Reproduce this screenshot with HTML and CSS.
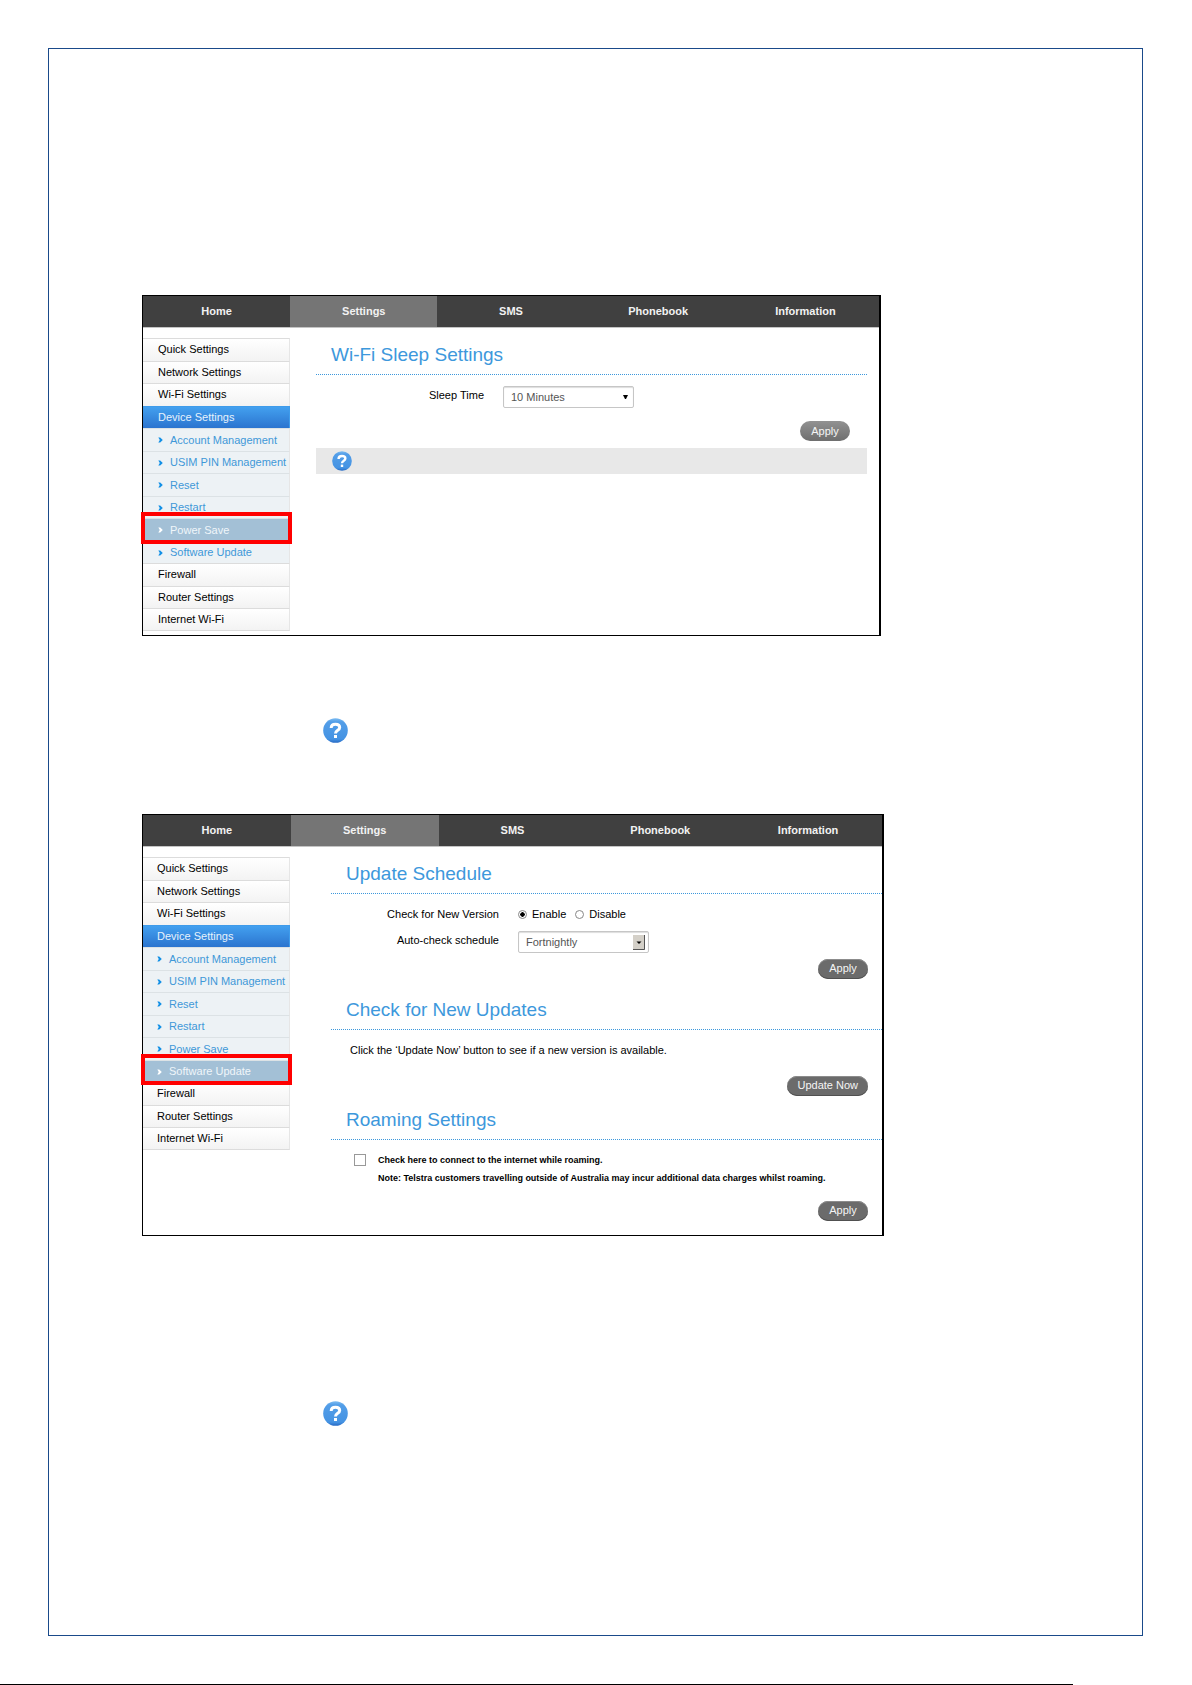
FILE: index.html
```
<!DOCTYPE html>
<html lang="en">

<head>
    <meta charset="UTF-8">
    <meta name="viewport" content="width=device-width, initial-scale=1.0">
    <title>Device Settings</title>
    <link rel="stylesheet" href="styles.css">
</head>

<body>
    <!-- Shared icon shapes -->
    <svg class="sprite" aria-hidden="true">
        <defs>
            <linearGradient id="helpFill" x1="0" y1="0" x2="0" y2="1">
                <stop offset="0" stop-color="#7dbcf2" />
                <stop offset="0.15" stop-color="#539ee8" />
                <stop offset="0.85" stop-color="#4593e3" />
                <stop offset="1" stop-color="#2669c4" />
            </linearGradient>
        </defs>
        <symbol id="help" viewBox="0 0 25 25">
            <circle cx="12.5" cy="12.5" r="12.3" fill="url(#helpFill)" />
            <path d="M8.2 9.9C8.2 7.2 10 6.2 12.5 6.2C15.2 6.2 16.7 7.4 16.7 9.4C16.7 12.4 12.5 12 12.5 15.4" fill="none" stroke="#fff" stroke-width="3" />
            <rect x="11" y="17" width="3" height="3" fill="#fff" />
        </symbol>
        <symbol id="arrow" viewBox="0 0 5 6">
            <path d="M0.3 0.4H2.2L4.8 3L2.2 5.6H0.3L1.8 3Z" fill="currentColor" />
        </symbol>
    </svg>

    <main class="sheet">
        <!-- Power save screen -->
        <section class="panel panel-sleep">
            <nav class="tabs">
                <a href="#">Home</a>
                <a href="#" class="active">Settings</a>
                <a href="#">SMS</a>
                <a href="#">Phonebook</a>
                <a href="#">Information</a>
            </nav>
            <div class="panel-body">
                <ul class="side-menu">
                    <li><a href="#">Quick Settings</a></li>
                    <li><a href="#">Network Settings</a></li>
                    <li><a href="#">Wi-Fi Settings</a></li>
                    <li><a href="#" class="active">Device Settings</a></li>
                    <li class="sub"><a href="#"><svg><use href="#arrow" /></svg>Account Management</a></li>
                    <li class="sub"><a href="#"><svg><use href="#arrow" /></svg>USIM PIN Management</a></li>
                    <li class="sub"><a href="#"><svg><use href="#arrow" /></svg>Reset</a></li>
                    <li class="sub"><a href="#"><svg><use href="#arrow" /></svg>Restart</a></li>
                    <li class="sub current"><a href="#"><svg><use href="#arrow" /></svg>Power Save</a></li>
                    <li class="sub"><a href="#"><svg><use href="#arrow" /></svg>Software Update</a></li>
                    <li><a href="#">Firewall</a></li>
                    <li><a href="#">Router Settings</a></li>
                    <li><a href="#">Internet Wi-Fi</a></li>
                </ul>
                <form class="content">
                    <h2>Wi-Fi Sleep Settings</h2>
                    <div class="form-row">
                        <label class="row-label" for="sleepTime">Sleep Time</label>
                        <div class="select-box">
                            <select id="sleepTime">
                                <option>10 Minutes</option>
                            </select>
                            <svg class="caret" viewBox="0 0 5 6"><path d="M0 1H5L3 5H2Z" /></svg>
                        </div>
                    </div>
                    <div class="actions actions-sleep">
                        <button type="button" class="btn btn-light">Apply</button>
                    </div>
                    <div class="help-bar">
                        <svg><use href="#help" /></svg>
                    </div>
                </form>
            </div>
        </section>

        <svg class="help-icon help-first"><use href="#help" /></svg>

        <!-- Software update screen -->
        <section class="panel panel-update">
            <nav class="tabs">
                <a href="#">Home</a>
                <a href="#" class="active">Settings</a>
                <a href="#">SMS</a>
                <a href="#">Phonebook</a>
                <a href="#">Information</a>
            </nav>
            <div class="panel-body">
                <ul class="side-menu">
                    <li><a href="#">Quick Settings</a></li>
                    <li><a href="#">Network Settings</a></li>
                    <li><a href="#">Wi-Fi Settings</a></li>
                    <li><a href="#" class="active">Device Settings</a></li>
                    <li class="sub"><a href="#"><svg><use href="#arrow" /></svg>Account Management</a></li>
                    <li class="sub"><a href="#"><svg><use href="#arrow" /></svg>USIM PIN Management</a></li>
                    <li class="sub"><a href="#"><svg><use href="#arrow" /></svg>Reset</a></li>
                    <li class="sub"><a href="#"><svg><use href="#arrow" /></svg>Restart</a></li>
                    <li class="sub"><a href="#"><svg><use href="#arrow" /></svg>Power Save</a></li>
                    <li class="sub current"><a href="#"><svg><use href="#arrow" /></svg>Software Update</a></li>
                    <li><a href="#">Firewall</a></li>
                    <li><a href="#">Router Settings</a></li>
                    <li><a href="#">Internet Wi-Fi</a></li>
                </ul>
                <form class="content">
                    <h2>Update Schedule</h2>
                    <div class="form-row" role="radiogroup" aria-labelledby="checkLabel">
                        <span class="row-label" id="checkLabel">Check for New Version</span>
                        <div class="radios">
                            <label><input type="radio" name="check" checked>Enable</label>
                            <label><input type="radio" name="check">Disable</label>
                        </div>
                    </div>
                    <div class="form-row">
                        <label class="row-label" for="schedule">Auto-check schedule</label>
                        <div class="select-box classic">
                            <select id="schedule">
                                <option>Fortnightly</option>
                            </select>
                            <svg class="caret" viewBox="0 0 12 15">
                                <path d="M0 0H12V15H0Z" fill="#d4d0c8" />
                                <path d="M11.5 0V14.5H0" fill="none" stroke="#555" />
                                <path d="M3.5 6.5H8.5L6 9Z" />
                            </svg>
                        </div>
                    </div>
                    <div class="actions">
                        <button type="button" class="btn">Apply</button>
                    </div>

                    <h2>Check for New Updates</h2>
                    <p class="hint">Click the ‘Update Now’ button to see if a new version is available.</p>
                    <div class="actions actions-now">
                        <button type="button" class="btn">Update Now</button>
                    </div>

                    <h2>Roaming Settings</h2>
                    <div class="roaming">
                        <input type="checkbox" id="roaming">
                        <div>
                            <label for="roaming">Check here to connect to the internet while roaming.</label>
                            <p>Note: Telstra customers travelling outside of Australia may incur additional data charges whilst roaming.</p>
                        </div>
                    </div>
                    <div class="actions actions-roaming">
                        <button type="button" class="btn">Apply</button>
                    </div>
                </form>
            </div>
        </section>

        <svg class="help-icon help-second"><use href="#help" /></svg>
    </main>
    <hr class="page-rule">
</body>

</html>
```
FILE: styles.css
```
/* Base Styles */
* {
    margin: 0;
    padding: 0;
    box-sizing: border-box;
}

body {
    background-color: #fff;
    color: #000;
    font-family: "Liberation Sans", Arial, sans-serif;
    font-size: 11px;
    line-height: 18px;
}

a {
    color: inherit;
    text-decoration: none;
}

.sprite {
    display: block;
    width: 0;
    height: 0;
}

/* Page frame */
.sheet {
    margin: 48px 49px 48px 48px;
    padding: 246px 258px 209px 93px;
    border: 1px solid #1a4a8a;
}

.page-rule {
    width: 90%;
    height: 1px;
    border: none;
    background-color: #000;
}

/* Panels */
.panel {
    border: 1px solid #000;
    border-right-width: 2px;
}

.panel-sleep {
    margin-right: 3px;
    padding-bottom: 4px;
}

.panel-body {
    display: flex;
    align-items: flex-start;
}

/* Tabs */
.tabs {
    display: grid;
    grid-template-columns: repeat(5, 1fr);
    border-bottom: 1px solid #c4c4c4;
    background-color: #404040;
    color: #f2f2f2;
    font-weight: bold;
    text-align: center;
}

.tabs a {
    height: 31px;
    line-height: 31px;
}

.tabs .active {
    background-color: #757575;
}

/* Side menu */
.side-menu {
    flex: 0 0 147px;
    margin-top: 10px;
    list-style: none;
}

.side-menu li {
    position: relative;
}

.side-menu a {
    display: block;
    height: 22px;
    padding-left: 15px;
    border-top: 1px solid #dcdcdc;
    border-right: 1px solid #e6e6e6;
    background: linear-gradient(#fff, #f3f3f3);
    line-height: 21px;
    white-space: nowrap;
}

.side-menu li:nth-child(odd) a {
    height: 23px;
}

.side-menu li:last-child a {
    border-bottom: 1px solid #dcdcdc;
}

.side-menu .active {
    border-color: #3f9bea;
    background: linear-gradient(#43a0ef, #2b74cf);
    color: #e6f2fc;
}

.side-menu .sub a {
    display: flex;
    align-items: center;
    gap: 7px;
    border-top-color: #dce2e5;
    background: #edf2f5;
    color: #3f98d8;
}

.side-menu .sub svg {
    width: 5px;
    height: 6px;
    color: #1290e6;
}

.side-menu .current a {
    background: #a3c0d6;
    color: #f0f6fa;
}

.side-menu .current svg {
    color: #fff;
}

.panel-update .side-menu a {
    padding-left: 14px;
}

/* Red marker round the current item */
.side-menu .current::after {
    content: "";
    position: absolute;
    inset: -6px -2px -3px;
    z-index: 1;
    border: 4px solid #f00;
}

/* Content */
.content {
    flex: 1;
    min-width: 0;
    padding-top: 16px;
}

.panel-sleep .content {
    margin: 0 12px 0 26px;
}

.panel-update .content {
    margin-left: 41px;
    padding-bottom: 14px;
}

h2 {
    margin-bottom: 11px;
    padding: 0 15px 8px;
    border-bottom: 1px dotted #3d98dc;
    color: #3d98dc;
    font-size: 19px;
    font-weight: normal;
    line-height: 22px;
}

.form-row {
    display: flex;
    align-items: flex-start;
    gap: 19px;
}

.form-row + .form-row {
    margin-top: 8px;
}

.row-label {
    width: 168px;
    text-align: right;
}

.radios {
    display: flex;
    gap: 9px;
}

.radios label {
    display: flex;
    align-items: center;
    gap: 5px;
}

.radios input {
    appearance: none;
    width: 9px;
    height: 9px;
    border: 1px solid #888;
    border-radius: 50%;
}

.radios input:checked {
    background: radial-gradient(#000 40%, #fff 50%);
}

.select-box {
    display: flex;
    align-items: center;
    width: 131px;
    height: 22px;
    padding-right: 5px;
    border: 1px solid #c6c6c6;
    border-radius: 2px;
    box-shadow: inset 0 1px 1px #ddd;
}

.select-box select {
    flex: 1;
    min-width: 0;
    appearance: none;
    padding-left: 7px;
    border: none;
    background: none;
    color: #555;
    font: inherit;
}

.caret {
    width: 5px;
    height: 6px;
}

.classic {
    padding-right: 3px;
}

.classic .caret {
    width: 12px;
    height: 15px;
}

.actions {
    display: flex;
    justify-content: flex-end;
    margin: 6px 14px 20px 0;
}

.actions-sleep {
    margin: 13px 17px 7px 0;
}

.actions-now {
    margin-top: 17px;
    margin-bottom: 13px;
}

.actions-roaming {
    margin-top: 14px;
    margin-bottom: 0;
}

.btn {
    min-width: 50px;
    height: 20px;
    padding: 0 10px 2px;
    border: none;
    border-radius: 10px;
    background-color: #6b6b6b;
    box-shadow: inset 0 1px 0 #8c8c8c, inset 0 -1px 0 #505050;
    color: #f5f5f5;
    font: inherit;
}

.btn-light {
    padding-bottom: 0;
    background: linear-gradient(#929292, #6e6e6e);
    box-shadow: none;
}

.help-bar {
    height: 26px;
    padding: 3px 16px;
    background-color: #e8e8e8;
}

.help-bar svg {
    display: block;
    width: 20px;
    height: 20px;
}

.hint {
    padding-left: 19px;
}

.roaming {
    display: flex;
    align-items: flex-start;
    gap: 12px;
    padding-left: 23px;
    font-size: 9px;
    font-weight: bold;
}

.roaming input {
    appearance: none;
    flex: none;
    width: 12px;
    height: 12px;
    margin-top: 3px;
    border: 1px solid #999;
}

/* Standalone help icons */
.help-icon {
    display: block;
    width: 25px;
    height: 25px;
    margin-left: 181px;
}

.help-first {
    margin-top: 82px;
    margin-bottom: 71px;
}

.help-second {
    margin-top: 165px;
}

/* Responsive Styles */
@media (max-width: 1000px) {
    .sheet {
        margin: 16px;
        padding: 48px 16px;
    }

    .row-label {
        width: 120px;
    }
}
```
